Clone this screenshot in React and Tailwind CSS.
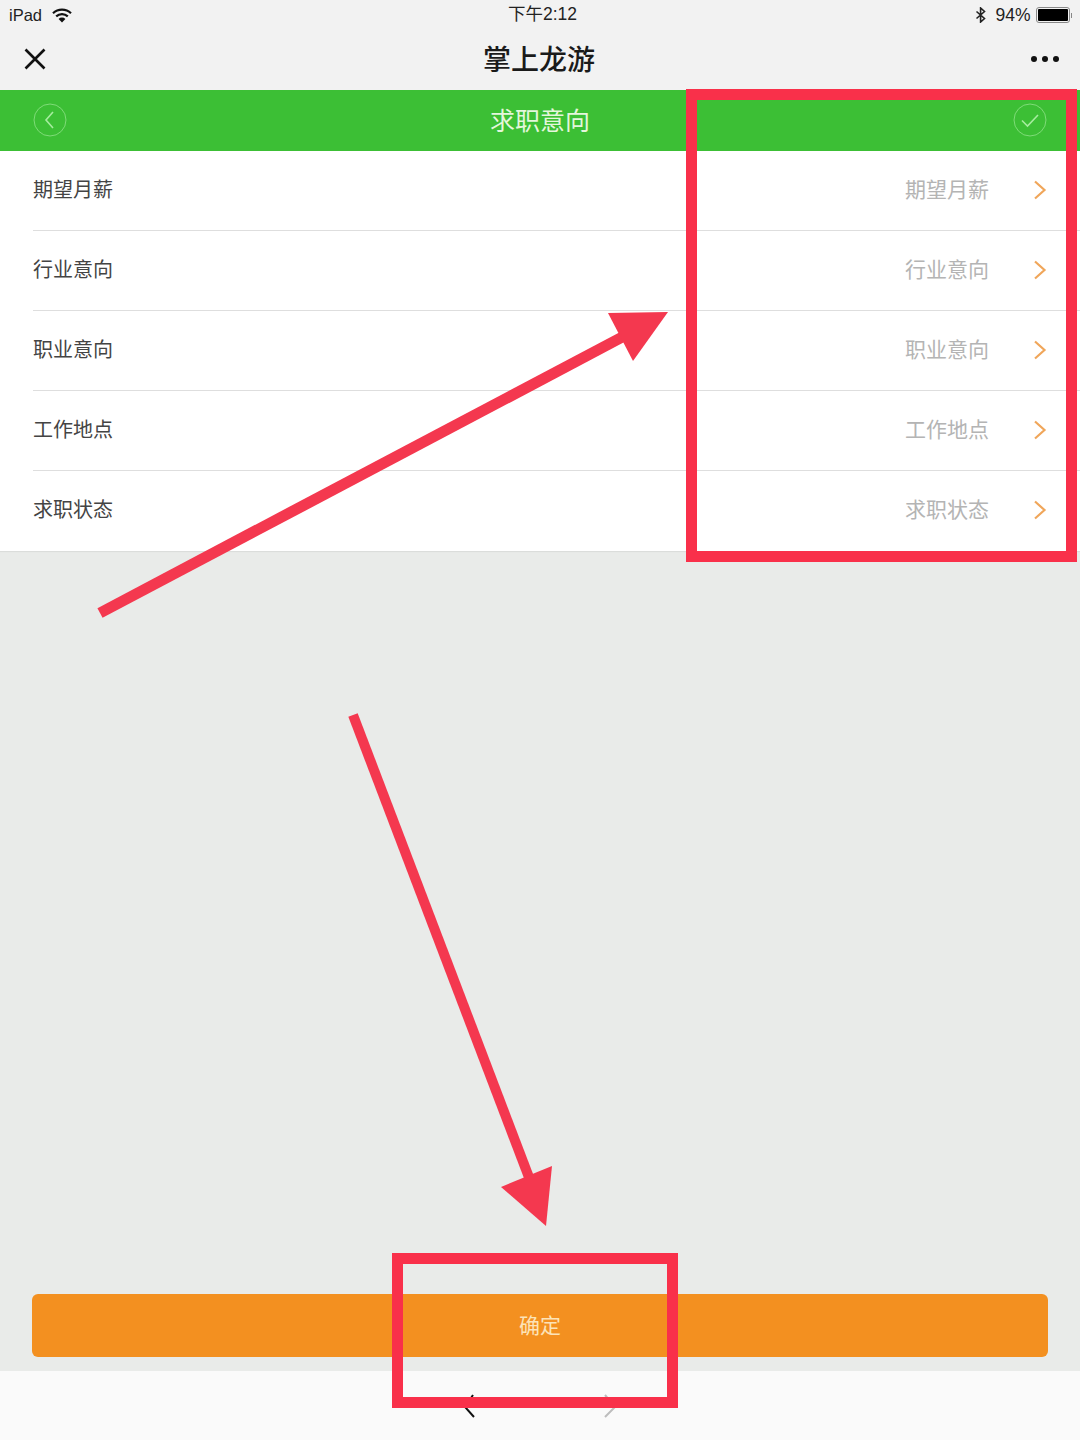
import React from 'react';

const ROWS = ['期望月薪', '行业意向', '职业意向', '工作地点', '求职状态'];
const FONT = '[font-family:"Liberation_Sans","Noto_Sans_CJK_SC",sans-serif]';

function Wifi() {
  return (
    <svg width="20" height="15" viewBox="0 0 20 15" className="ml-[10px]">
      <path d="M1 5.2a13 13 0 0 1 18 0" fill="none" stroke="#111" strokeWidth="2.2" />
      <path d="M4.2 8.4a8.4 8.4 0 0 1 11.6 0" fill="none" stroke="#111" strokeWidth="2.2" />
      <path d="M6.6 10.9a4.8 4.8 0 0 1 6.8 0L10 14.4z" fill="#111" />
    </svg>
  );
}

function Bluetooth() {
  return (
    <svg width="12" height="16" viewBox="0 0 12 16" className="mr-[8px]">
      <path d="M1.5 4.5l8 7L5.6 15V1l3.9 3.5-8 7" fill="none" stroke="#222" strokeWidth="1.6" />
    </svg>
  );
}

function Battery() {
  return (
    <div className="ml-[5px] flex items-center">
      <div className="flex h-[16px] w-[34px] items-center rounded-[3px] border border-[#888] p-[1px]">
        <div className="h-full w-[30px] rounded-[1px] bg-black" />
      </div>
      <div className="ml-[1px] h-[5px] w-[1.5px] bg-[#888]" />
    </div>
  );
}

function Chevron() {
  return (
    <svg width="14" height="20" viewBox="0 0 14 20">
      <path d="M2 1.5L11.5 10 2 18.5" fill="none" stroke="#f0a65a" strokeWidth="2.2" />
    </svg>
  );
}

function CircleIcon({ d }) {
  return (
    <svg width="34" height="34" viewBox="0 0 34 34">
      <circle cx="17" cy="17" r="16" fill="none" stroke="#7fdc78" strokeWidth="1" />
      <path d={d} fill="none" stroke="#a6ec9f" strokeWidth="1.6" />
    </svg>
  );
}

export default function App() {
  return (
    <div className={`relative flex h-[1440px] w-[1080px] flex-col overflow-hidden bg-[#e9ebe9] ${FONT}`}>
      {/* top bars */}
      <div className="bg-[#f2f2f2]">
        <div className="relative flex h-[30px] items-center justify-between pl-[9px] pr-[8px] text-[#222]">
          <div className="flex items-center text-[16.5px]">
            iPad
            <Wifi />
          </div>
          <div className="absolute left-[508px] top-[4px] text-[17.5px] leading-[21px]">下午2:12</div>
          <div className="flex items-center text-[17.5px]">
            <Bluetooth />
            94%
            <Battery />
          </div>
        </div>
        <div className="relative flex h-[60px] items-center justify-between pb-[2px] pl-[24px] pr-[21px]">
          <svg width="22" height="22" viewBox="0 0 22 22">
            <path d="M1.5 1.5l19 19M20.5 1.5l-19 19" stroke="#111" strokeWidth="2.6" fill="none" />
          </svg>
          <div className="absolute inset-x-0 top-[13px] pr-[2px] text-center text-[28px] font-medium leading-[36px] text-[#1a1a1a]">掌上龙游</div>
          <div className="flex gap-[5px]">
            <div className="h-[6px] w-[6px] rounded-full bg-[#111]" />
            <div className="h-[6px] w-[6px] rounded-full bg-[#111]" />
            <div className="h-[6px] w-[6px] rounded-full bg-[#111]" />
          </div>
        </div>
      </div>

      {/* green header */}
      <div className="relative flex h-[61px] items-center justify-between bg-[#3cbf35] pb-[2px] pl-[33px] pr-[33px]">
        <CircleIcon d="M20 9l-7 8 7 8" />
        <div className="absolute inset-x-0 top-[14px] text-center text-[25px] leading-[34px] text-[#e4f6dc]">求职意向</div>
        <CircleIcon d="M9 17.5l5.5 5.5L25 12" />
      </div>

      {/* rows */}
      <div className="bg-white shadow-[0_1px_1px_rgba(0,0,0,0.06)]">
        {ROWS.map((label, i) => (
          <div key={label} className="pl-[33px]">
            <div className={`flex h-[80px] items-center justify-between pb-[2px] pr-[33px] ${i < ROWS.length - 1 ? 'border-b border-[#dedede]' : ''}`}>
              <span className="text-[20px] text-[#444]">{label}</span>
              <div className="flex items-center gap-[44px]">
                <span className="text-[21px] text-[#b4b4b4]">{label}</span>
                <Chevron />
              </div>
            </div>
          </div>
        ))}
      </div>

      {/* button and bottom bar */}
      <div className="mt-auto px-[32px] pb-[14px]">
        <div className="flex h-[63px] items-center justify-center rounded-[6px] bg-[#f39020] text-[21px] text-[#fce3b8]">确定</div>
      </div>
      <div className="flex h-[69px] items-center justify-center gap-[128px] bg-[#fafafa] pb-[2px] pt-[3px]">
        <svg width="12" height="26" viewBox="0 0 12 26">
          <path d="M10 2L2 14l9 10" fill="none" stroke="#111" strokeWidth="2" />
        </svg>
        <svg width="14" height="26" viewBox="0 0 14 26">
          <path d="M2 2l10 12-10 10" fill="none" stroke="#bdbdbd" strokeWidth="2" />
        </svg>
      </div>

      {/* annotations drawn over the screenshot */}
      <div className="absolute left-[686px] top-[89px] h-[473px] w-[391px] border-[11px] border-[#f9304a]" />
      <div className="absolute left-[392px] top-[1253px] h-[155px] w-[286px] border-[11px] border-[#f9304a]" />
      <svg className="absolute left-0 top-0" width="1080" height="1440" viewBox="0 0 1080 1440">
        <path d="M100 613L628 334" stroke="#f4384f" strokeWidth="11" fill="none" />
        <path d="M608 313L668 312L633 361Z" fill="#f4384f" />
        <path d="M353 715L530 1180" stroke="#f4384f" strokeWidth="10" fill="none" />
        <path d="M501 1187L552 1166L546 1226Z" fill="#f4384f" />
      </svg>
    </div>
  );
}
